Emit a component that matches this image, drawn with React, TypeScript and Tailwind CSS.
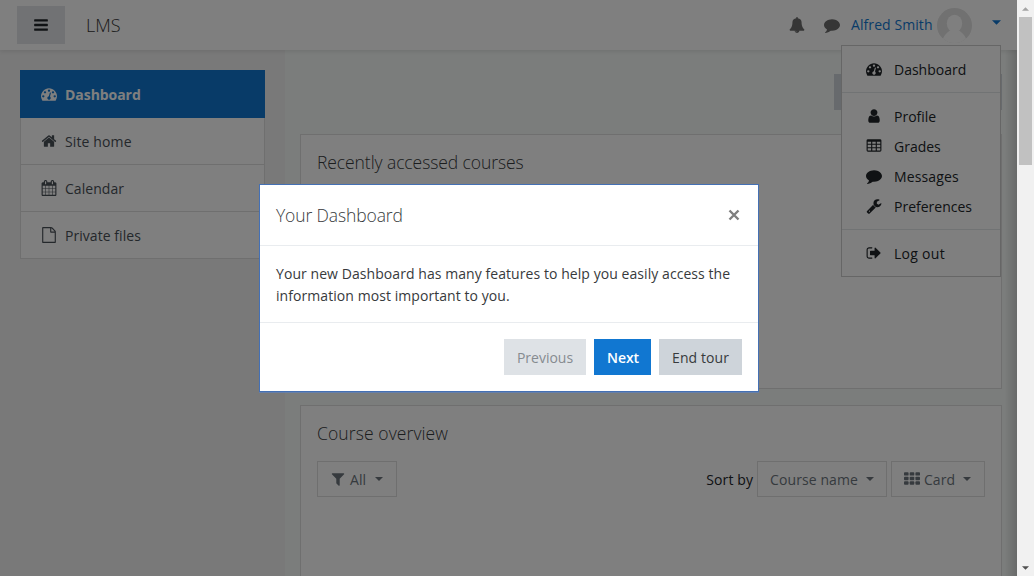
import React from "react";

const PATHS = {
  bars: "M1664 1344v128q0 26-19 45t-45 19h-1408q-26 0-45-19t-19-45v-128q0-26 19-45t45-19h1408q26 0 45 19t19 45zm0-512v128q0 26-19 45t-45 19h-1408q-26 0-45-19t-19-45v-128q0-26 19-45t45-19h1408q26 0 45 19t19 45zm0-512v128q0 26-19 45t-45 19h-1408q-26 0-45-19t-19-45v-128q0-26 19-45t45-19h1408q26 0 45 19t19 45z",
  gauge: "M384 1152q0-53-37.5-90.5t-90.5-37.5-90.5 37.5-37.5 90.5 37.5 90.5 90.5 37.5 90.5-37.5 37.5-90.5zm192-448q0-53-37.5-90.5t-90.5-37.5-90.5 37.5-37.5 90.5 37.5 90.5 90.5 37.5 90.5-37.5 37.5-90.5zm428 481l101-382q6-26-7.5-48.5t-38.5-29.5-48 6.5-30 39.5l-101 382q-60 5-107 43.5t-63 98.5q-20 77 20 146t117 89 146-20 89-117q16-60-6-117t-72-91zm660-33q0-53-37.5-90.5t-90.5-37.5-90.5 37.5-37.5 90.5 37.5 90.5 90.5 37.5 90.5-37.5 37.5-90.5zm-640-640q0-53-37.5-90.5t-90.5-37.5-90.5 37.5-37.5 90.5 37.5 90.5 90.5 37.5 90.5-37.5 37.5-90.5zm448 192q0-53-37.5-90.5t-90.5-37.5-90.5 37.5-37.5 90.5 37.5 90.5 90.5 37.5 90.5-37.5 37.5-90.5zm320 448q0 261-141 483-19 29-54 29h-1402q-35 0-54-29-141-221-141-483 0-182 71-348t191-286 286-191 348-71 348 71 286 191 191 286 71 348z",
  home: "M1472 992v480q0 26-19 45t-45 19h-384v-384h-256v384h-384q-26 0-45-19t-19-45v-480q0-1 .5-3t.5-3l575-474 575 474q1 2 1 6zm223-69l-62 74q-8 9-21 11h-3q-13 0-21-7l-692-577-692 577q-12 8-24 7-13-2-21-11l-62-74q-8-10-7-23.5t11-21.5l719-599q32-26 76-26t76 26l244 204v-195q0-14 9-23t23-9h192q14 0 23 9t9 23v408l219 182q10 8 11 21.5t-7 23.5z",
  calendar: "M192 1664h288v-288h-288v288zm352 0h320v-288h-320v288zm-352-352h288v-320h-288v320zm352 0h320v-320h-320v320zm-352-384h288v-288h-288v288zm736 736h320v-288h-320v288zm-384-736h320v-288h-320v288zm768 736h288v-288h-288v288zm-384-352h320v-320h-320v320zm-352-864v-288q0-13-9.5-22.5t-22.5-9.5h-64q-13 0-22.5 9.5t-9.5 22.5v288q0 13 9.5 22.5t22.5 9.5h64q13 0 22.5-9.5t9.5-22.5zm736 864h288v-320h-288v320zm-384-384h320v-288h-320v288zm384 0h288v-288h-288v288zm32-480v-288q0-13-9.5-22.5t-22.5-9.5h-64q-13 0-22.5 9.5t-9.5 22.5v288q0 13 9.5 22.5t22.5 9.5h64q13 0 22.5-9.5t9.5-22.5zm384-64v1280q0 52-38 90t-90 38h-1408q-52 0-90-38t-38-90v-1280q0-52 38-90t90-38h128v-96q0-66 47-113t113-47h64q66 0 113 47t47 113v96h384v-96q0-66 47-113t113-47h64q66 0 113 47t47 113v96h128q52 0 90 38t38 90z",
  file: "M1596 380q28 28 48 76t20 88v1152q0 40-28 68t-68 28h-1344q-40 0-68-28t-28-68v-1600q0-40 28-68t68-28h896q40 0 88 20t76 48zm-444-244v376h376q-10-29-22-41l-313-313q-12-12-41-22zm384 1528v-1024h-416q-40 0-68-28t-28-68v-416h-768v1536h1280z",
  bell: "M912 1696q0-16-16-16-59 0-101.5-42.5t-42.5-101.5q0-16-16-16t-16 16q0 73 51.5 124.5t124.5 51.5q16 0 16-16zm816-288q0 52-38 90t-90 38h-448q0 106-75 181t-181 75-181-75-75-181h-448q-52 0-90-38t-38-90q50-42 91-88t85-119.5 74.5-158.5 50-206 19.5-260q0-152 117-282.5t307-158.5q-8-19-8-39 0-40 28-68t68-28 68 28 28 68q0 20-8 39 190 28 307 158.5t117 282.5q0 139 19.5 260t50 206 74.5 158.5 85 119.5 91 88z",
  comment: "M1792 896q0 174-120 321.5t-326 233-450 85.5q-70 0-145-8-198 175-460 242-49 14-114 22-17 2-30.5-9t-17.5-29v-1q-3-4-.5-12t2-10 4.5-9.5l6-9 7-8.5 8-9q7-8 31-34.5t34.5-38 31-39.5 32.5-51 27-59 26-76q-157-89-247.5-220t-90.5-281q0-130 71-248.5t191-204.5 286-136.5 348-50.5q244 0 450 85.5t326 233 120 321.5z",
  user: "M1536 1399q0 109-62.5 187t-150.5 78h-854q-88 0-150.5-78t-62.5-187q0-85 8.5-160.5t31.5-152 58.5-131 94-89 134.5-34.5q131 128 313 128t313-128q76 0 134.5 34.5t94 89 58.5 131 31.5 152 8.5 160.5zm-256-887q0 159-112.5 271.5t-271.5 112.5-271.5-112.5-112.5-271.5 112.5-271.5 271.5-112.5 271.5 112.5 112.5 271.5z",
  table: "M224 128h1344q160 0 160 160v1088q0 160-160 160h-1344q-160 0-160-160v-1088q0-160 160-160zM192 416v224h384v-224zM704 416v224h384v-224zM1216 416v224h384v-224zM192 768v256h384v-256zM704 768v256h384v-256zM1216 768v256h384v-256zM192 1152v256h384v-256zM704 1152v256h384v-256zM1216 1152v256h384v-256z",
  wrench: "M448 1472q0-26-19-45t-45-19-45 19-19 45 19 45 45 19 45-19 19-45zm644-420l-682 682q-37 37-90 37-52 0-91-37l-106-108q-38-36-38-90 0-53 38-91l681-681q39 98 114.5 173.5t173.5 114.5zm634-435q0 39-23 106-47 134-164.5 217.5t-258.5 83.5q-185 0-316.5-131.5t-131.5-316.5 131.5-316.5 316.5-131.5q58 0 121.5 16.5t107.5 46.5q16 11 16 28t-16 28l-293 169v224l193 107q5-3 79-48.5t135.5-81 70.5-35.5q15 0 23.5 10t8.5 25z",
  signOut: "M704 1440q0 4 1 20t.5 26.5-3 23.5-10 19.5-20.5 6.5h-320q-119 0-203.5-84.5t-84.5-203.5v-704q0-119 84.5-203.5t203.5-84.5h320q13 0 22.5 9.5t9.5 22.5q0 4 1 20t.5 26.5-3 23.5-10 19.5-20.5 6.5h-320q-66 0-113 47t-47 113v704q0 66 47 113t113 47h312l11.5 1 11.5 3 8 5.5 7 9 2 13.5zm928-544q0 26-19 45l-544 544q-19 19-45 19t-45-19-19-45v-288h-448q-26 0-45-19t-19-45v-384q0-26 19-45t45-19h448v-288q0-26 19-45t45-19 45 19l544 544q19 19 19 45z",
  filter: "M1595 295q17 41-14 70l-493 493v742q0 42-39 59-13 5-25 5-27 0-45-19l-256-256q-19-19-19-45v-486l-493-493q-31-29-14-70 17-39 59-39h1280q42 0 59 39z",
};

type IconName = keyof typeof PATHS;

function Icon({ name, className = "" }: { name: IconName; className?: string }) {
  return (
    <svg viewBox="0 0 1792 1792" fill="currentColor" fillRule="evenodd" className={"size-4 shrink-0 " + className}>
      <path d={PATHS[name]} />
    </svg>
  );
}

function GridIcon() {
  const cols = [0, 640, 1280];
  const rows = [128, 640, 1152];
  return (
    <svg viewBox="0 0 1792 1792" fill="currentColor" className="size-4 shrink-0">
      {rows.map((y) => cols.map((x) => <rect key={x + "-" + y} x={x} y={y} width="512" height="384" rx="96" />))}
    </svg>
  );
}

function Caret({ className = "" }: { className?: string }) {
  return (
    <svg viewBox="0 0 10 5" fill="currentColor" className={"h-1 w-2 shrink-0 " + className}>
      <path d="M0 0h10L5 5z" />
    </svg>
  );
}

function NavItem({ icon, label, tracking = "" }: { icon: IconName; label: string; tracking?: string }) {
  return (
    <a className="flex h-[47px] items-center border-x border-b border-black/[.125] bg-white pl-5 text-[#495057]">
      <Icon name={icon} />
      <span className={"ml-2 " + tracking}>{label}</span>
    </a>
  );
}

function MenuItem({ icon, label, tracking = "" }: { icon: IconName; label: string; tracking?: string }) {
  return (
    <a className="flex h-[30px] items-center pl-6 text-[#212529]">
      <Icon name={icon} />
      <span className={"ml-3 " + tracking}>{label}</span>
    </a>
  );
}

function Header() {
  return (
    <header className="relative flex h-[50px] shrink-0 items-center bg-white pl-[17px] pr-4 shadow-[0_2px_4px_rgba(0,0,0,.08)]">
      <button className="flex h-[38px] w-12 items-center justify-center bg-[#e2e5e9] text-[#212529]">
        <Icon name="bars" />
      </button>
      <span className="ml-[21px] text-[18px] font-[350] text-[#333]">LMS</span>
      <div className="ml-auto flex items-center">
        <Icon name="bell" className="mr-[19px] text-[#6c6c6c]" />
        <Icon name="comment" className="mr-[11px] text-[#6c6c6c]" />
        <span className="relative -top-px w-[82px] whitespace-nowrap tracking-[.08px] text-[#1177d1]">Alfred Smith</span>
        <svg viewBox="0 0 35 35" className="ml-1 size-[35px]">
          <defs>
            <clipPath id="face">
              <circle cx="17.5" cy="17.5" r="17.5" />
            </clipPath>
          </defs>
          <g clipPath="url(#face)">
            <rect width="35" height="35" fill="#e2e2e2" />
            <ellipse cx="17.5" cy="15.5" rx="7.7" ry="8.7" fill="#fff" />
            <path d="M5 35c0-5 3.5-9.5 8-12.5h9c4.500 3 8 7.500 8 12.500z" fill="#fff" />
          </g>
        </svg>
        <Caret className="relative -top-[3px] ml-5 h-[5px] w-[9px] text-[#1177d1]" />
      </div>
    </header>
  );
}

function Drawer() {
  return (
    <nav className="w-[285px] shrink-0 bg-[#f2f2f2] pl-5 pt-5">
      <div className="w-[245px]">
        <a className="flex h-12 items-center bg-[#1177d1] pl-[21px] font-bold text-white">
          <Icon name="gauge" />
          <span className="ml-2 tracking-[-.05px]">Dashboard</span>
        </a>
        <NavItem icon="home" label="Site home" tracking="tracking-[.12px]" />
        <NavItem icon="calendar" label="Calendar" tracking="tracking-[.05px]" />
        <NavItem icon="file" label="Private files" tracking="tracking-[.05px]" />
      </div>
    </nav>
  );
}

function DropButton({ children, className }: { children: React.ReactNode; className: string }) {
  return (
    <button className={"flex h-9 items-center border border-black/[.125] text-[#6c757d] " + className}>{children}</button>
  );
}

function Main() {
  return (
    <main className="flex-1 bg-[#f6faf8] pl-[15px] pr-[15px] pt-6">
      <div className="flex justify-end">
        <div className="h-9 w-[168px] bg-[#ced4da]" />
      </div>
      <section className="mt-6 h-[255px] border border-black/[.125] bg-white pl-4 pt-[15px]">
        <h2 className="text-[17.5px] font-light leading-6 tracking-[-.08px] text-[#373a3c]">Recently accessed courses</h2>
      </section>
      <section className="mt-4 h-[300px] border border-black/[.125] bg-white px-4 pt-[15px]">
        <h2 className="text-[17.5px] font-light leading-6 tracking-[.1px] text-[#373a3c]">Course overview</h2>
        <div className="mt-4 flex items-center">
          <DropButton className="w-20 pl-3">
            <Icon name="filter" />
            <span className="ml-1 tracking-[.1px]">All</span>
            <Caret className="ml-[9px]" />
          </DropButton>
          <span className="ml-auto mr-1 tracking-[.1px] text-[#212529]">Sort by</span>
          <DropButton className="mr-1 w-[130px] pl-3">
            <span className="tracking-[.1px]">Course name</span>
            <Caret className="ml-2" />
          </DropButton>
          <DropButton className="w-[94px] pl-3">
            <GridIcon />
            <span className="ml-1 tracking-[.05px]">Card</span>
            <Caret className="ml-2" />
          </DropButton>
        </div>
      </section>
    </main>
  );
}

function UserMenu() {
  return (
    <div className="absolute left-[841px] top-[45px] h-[232px] w-[160px] border border-black/20 bg-white py-2">
      <MenuItem icon="gauge" label="Dashboard" />
      <div className="my-2 h-px bg-[#e3e6e9]" />
      <MenuItem icon="user" label="Profile" />
      <MenuItem icon="table" label="Grades" />
      <MenuItem icon="comment" label="Messages" tracking="tracking-[.12px]" />
      <MenuItem icon="wrench" label="Preferences" />
      <div className="my-2 h-px bg-[#e3e6e9]" />
      <MenuItem icon="signOut" label="Log out" tracking="tracking-[.28px]" />
    </div>
  );
}

function TourDialog() {
  return (
    <div className="absolute left-[259px] top-[184px] flex h-[208px] w-[500px] flex-col border border-[#4470b4] bg-white shadow-[0_1px_0_rgba(90,130,200,.6)]">
      <div className="flex h-[61px] items-center border-b border-[#e9ecef] px-4">
        <h3 className="text-[17.5px] font-light tracking-[-.12px] text-[#373a3c]">Your Dashboard</h3>
        <svg viewBox="0 0 12 12" className="ml-auto mr-0.5 size-3" stroke="#7f7f7f" strokeWidth="2.4">
          <path d="M1.5 1.5l9 9M10.5 1.5l-9 9" />
        </svg>
      </div>
      <p className="h-[77px] whitespace-nowrap border-b border-[#e9ecef] px-4 pt-[17px] leading-[22px] tracking-[.065px] text-[#373a3c]">
        Your new Dashboard has many features to help you easily access the
        <br />
        information most important to you.
      </p>
      <div className="flex justify-end gap-2 px-4 pt-4">
        <button className="h-9 w-[82px] bg-[#dee2e6] text-[#868b90]">Previous</button>
        <button className="h-9 w-[57px] bg-[#1177d1] pl-px font-semibold tracking-[-.1px] text-white">Next</button>
        <button className="h-9 w-[83px] bg-[#ced4da] tracking-[.08px] text-[#373a3c]">End tour</button>
      </div>
    </div>
  );
}

function Scrollbar() {
  return (
    <div className="flex w-[17px] shrink-0 flex-col items-center bg-[#f1f1f1]">
      <div className="flex h-[17px] items-center">
        <svg viewBox="0 0 8 4" className="h-1 w-[7px]">
          <path d="M0 4h8L4 0z" fill="#a3a3a3" />
        </svg>
      </div>
      <div className="h-[148px] w-[13px] bg-[#c1c1c1]" />
      <div className="mt-auto flex h-[17px] items-center">
        <svg viewBox="0 0 8 4" className="h-1 w-[7px]">
          <path d="M0 0h8L4 4z" fill="#505050" />
        </svg>
      </div>
    </div>
  );
}

export default function App() {
  return (
    <div className="flex h-[576px] w-[1034px] overflow-hidden font-['Open_Sans','Noto_Sans',sans-serif] text-[14px] font-[370]">
      <div className="relative flex w-[1017px] flex-col overflow-hidden">
        <Header />
        <div className="flex flex-1">
          <Drawer />
          <Main />
        </div>
        <div className="absolute bottom-0 right-0 top-[50px] w-3 bg-linear-to-l from-black/15 to-transparent" />
        <UserMenu />
        <div className="absolute inset-0 bg-black/50" />
        <TourDialog />
      </div>
      <Scrollbar />
    </div>
  );
}
